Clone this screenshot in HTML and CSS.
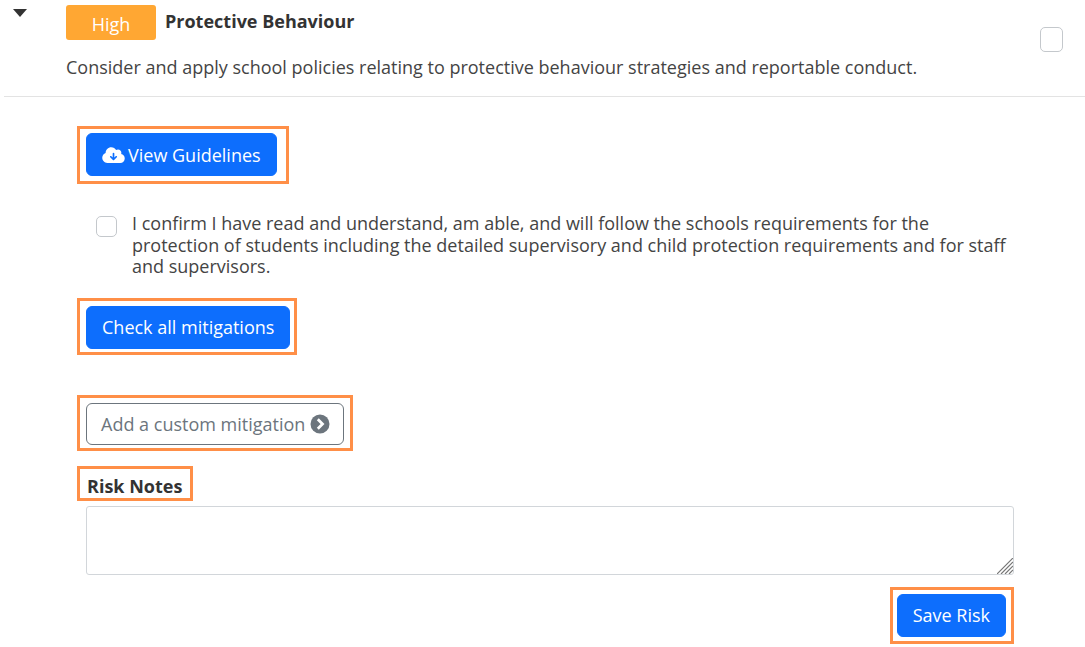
FILE: index.html
```html
<!DOCTYPE html>
<html lang="en">
<head>
  <meta charset="UTF-8">
  <meta name="viewport" content="width=device-width, initial-scale=1.0">
  <title>Protective Behaviour</title>
  <link rel="stylesheet" href="styles.css">
</head>
<body>

  <div class="risk-header">
    <div class="caret"></div>
    <div class="risk-summary">
      <div class="risk-title-row">
        <span class="badge-high">High</span>
        <span class="risk-title">Protective Behaviour</span>
      </div>
      <p class="risk-desc">Consider and apply school policies relating to protective behaviour strategies and reportable conduct.</p>
    </div>
    <input type="checkbox" class="check check-header">
  </div>

  <div class="risk-body">
    <div class="mark mark-guidelines">
      <button class="btn btn-primary btn-icon">
        <svg class="cloud" viewBox="0 0 640 512" width="23" height="18">
          <path fill="#fff" d="M144 480C64.500 480 0 415.500 0 336c0-62.800 40.200-116.200 96.200-135.900-.1-2.700-.2-5.400-.2-8.100 0-88.400 71.600-160 160-160 59.300 0 111 32.200 138.700 80.200C409.900 102 428.300 96 448 96c53 0 96 43 96 96 0 12.200-2.300 23.800-6.400 34.600C596 238.400 640 290.100 640 352c0 70.700-57.300 128-128 128H144z"/>
          <path fill="#0d6efd" d="M296 216v110l-37-37c-9.400-9.400-24.600-9.400-33.900 0s-9.400 24.600 0 33.900l78 78c9.400 9.400 24.600 9.400 33.900 0l78-78c9.400-9.400 9.400-24.600 0-33.900s-24.600-9.400-33.900 0l-37 37V216c0-13.300-10.700-24-24-24s-24 10.700-24 24z"/>
        </svg>
        View Guidelines
      </button>
    </div>

    <label class="confirm">
      <input type="checkbox" class="check check-confirm">
      <span>I confirm I have read and understand, am able, and will follow the schools requirements for the protection of students including the detailed supervisory and child protection requirements and for staff and supervisors.</span>
    </label>

    <div class="mark mark-check-all">
      <button class="btn btn-primary">Check all mitigations</button>
    </div>

    <div class="mark mark-custom">
      <button class="btn btn-outline">
        Add a custom mitigation
        <svg class="chevron" viewBox="0 0 20 20" width="20" height="20">
          <circle cx="10" cy="10" r="9.500" fill="#6c757d"/>
          <path d="M7.800 5.300 12.500 10l-4.700 4.700" fill="none" stroke="#fff" stroke-width="2.800"/>
        </svg>
      </button>
    </div>

    <div class="mark mark-label">
      <label class="notes-label" for="riskNotes">Risk Notes</label>
    </div>

    <div class="notes-wrap">
      <textarea class="notes" id="riskNotes"></textarea>
      <svg class="grip" viewBox="0 0 16 16" width="16" height="16">
        <path d="M0 16 16 0M4 16 16 4M8 16l8-8M12 16l4-4" stroke="#777" stroke-width="1.200" fill="none"/>
      </svg>
    </div>

    <div class="save-row">
      <div class="mark mark-save">
        <button class="btn btn-primary">Save Risk</button>
      </div>
    </div>
  </div>

</body>
</html>
```

FILE: styles.css
```css
body {
  margin: 0;
  font-family: "Open Sans", Arial, sans-serif;
  font-size: 18px;
  color: #444;
  background-color: #fff;
}

.risk-header {
  display: flex;
  align-items: flex-start;
  height: 96px;
  margin-left: 4px;
  border-bottom: 1px solid #e3e3e3;
}

.caret {
  width: 0;
  height: 0;
  margin: 9px 39px 0 9px;
  border-left: 7px solid transparent;
  border-right: 7px solid transparent;
  border-top: 8px solid #333;
}

.risk-summary {
  flex: 1;
  padding-top: 5px;
}

.risk-title-row {
  display: flex;
  align-items: flex-start;
  gap: 9px;
}

.badge-high {
  width: 90px;
  height: 35px;
  line-height: 38px;
  text-align: center;
  color: #fff;
  background-color: #ffa733;
  border-radius: 3px;
}

.risk-title {
  font-weight: 700;
  line-height: 33px;
  color: #333;
}

.risk-desc {
  margin: 16px 0 0;
  line-height: 22px;
}

.check {
  appearance: none;
  margin: 0;
  background-color: #fff;
  border: 1px solid #c4c8cc;
  border-radius: 5px;
}

.check-header {
  width: 23px;
  height: 25px;
  margin: 27px 22px 0 0;
}

.risk-body {
  padding: 29px 71px 0 77px;
}

.mark {
  display: flex;
  width: fit-content;
  box-sizing: border-box;
  border: 3px solid #ff8f47;
}

.btn {
  display: flex;
  align-items: center;
  height: 43px;
  box-sizing: border-box;
  font-family: inherit;
  font-size: 18px;
  border-radius: 6px;
  white-space: nowrap;
  cursor: pointer;
}

.btn-primary {
  padding: 0 15px;
  color: #fff;
  background-color: #0d6efd;
  border: 1px solid #0d6efd;
}

.btn-outline {
  padding: 0 13px 0 14px;
  height: 42px;
  gap: 5px;
  color: #6c757d;
  background-color: #fff;
  border: 1px solid #6c757d;
}

.btn-icon {
  gap: 3px;
}

.mark-guidelines {
  height: 58px;
  padding: 4px 9px 0 6px;
}

.confirm {
  display: flex;
  gap: 15px;
  margin: 29px 0 0 19px;
  line-height: 21.500px;
}

.check-confirm {
  flex: none;
  width: 21px;
  height: 21px;
  margin-top: 3px;
}

.mark-check-all {
  height: 57px;
  margin-top: 20px;
  padding: 5px 4px 0 6px;
}

.mark-custom {
  height: 56px;
  margin-top: 40px;
  padding: 5px 6px 0 6px;
}

.mark-label {
  height: 35px;
  margin-top: 15px;
  padding: 0 8px 0 7px;
}

.notes-label {
  font-weight: 700;
  line-height: 34px;
  color: #333;
}

.notes-wrap {
  position: relative;
  width: 928px;
  margin: 5px 0 0 9px;
}

.notes {
  display: block;
  width: 100%;
  height: 69px;
  box-sizing: border-box;
  background-color: #fff;
  border: 1px solid #d2d6da;
  border-radius: 3px;
  resize: none;
}

.grip {
  position: absolute;
  right: 1px;
  bottom: 1px;
}

.save-row {
  display: flex;
  justify-content: flex-end;
  margin-top: 12px;
}

.mark-save {
  height: 57px;
  padding: 4px 5px 0 4px;
}
```
